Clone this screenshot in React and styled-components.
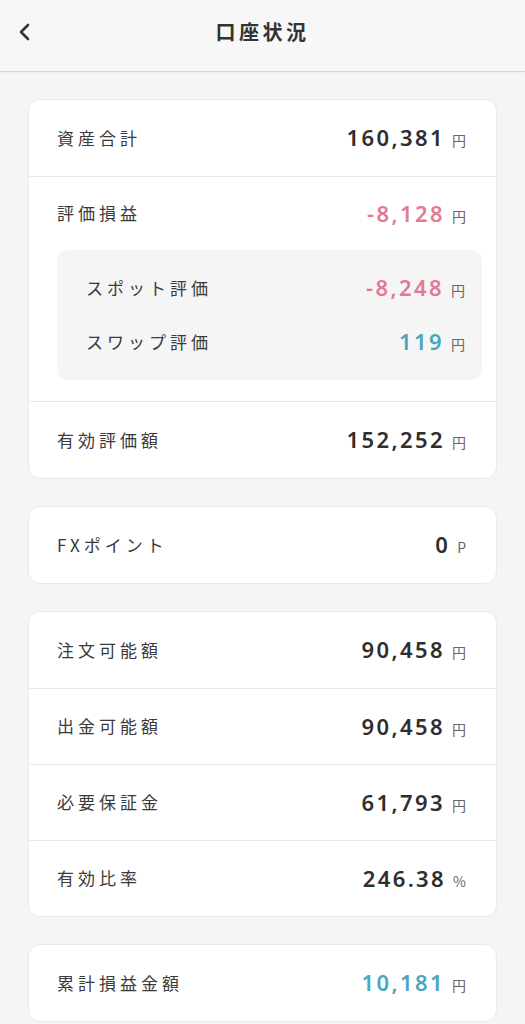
import React from 'react'
import styled, { createGlobalStyle } from 'styled-components'

const GlobalStyle = createGlobalStyle`
  html, body {
    margin: 0;
    padding: 0;
    background: #f5f5f5;
    font-family: "Noto Sans CJK JP", "Noto Sans", sans-serif;
    color: #333;
  }
`

const colors = {
  plain: '#2e2e2e',
  minus: '#e27a93',
  plus: '#4ba6c0',
}

const Header = styled.header`
  height: 72px;
  box-sizing: border-box;
  display: flex;
  align-items: center;
  justify-content: center;
  position: relative;
  padding-bottom: 8px;
  background: #f7f7f7;
  border-bottom: 1px solid #d6d6d6;
  box-shadow: 0 1px 2px rgba(0, 0, 0, 0.04);
`

const Back = styled.button`
  position: absolute;
  left: 12px;
  top: 18px;
  width: 26px;
  height: 28px;
  border: 0;
  padding: 0;
  background: none;
  display: flex;
  align-items: center;
  justify-content: center;
`

const Title = styled.h1`
  margin: 0;
  font-size: 20px;
  font-weight: 700;
  letter-spacing: 3.5px;
  color: #333;
`

const Page = styled.main`
  padding: 27px 28px 40px;
  display: flex;
  flex-direction: column;
  gap: 27px;
`

const Card = styled.section`
  background: #fff;
  border: 1px solid #e6eaec;
  border-radius: 12px;
  overflow: hidden;
`

const Row = styled.div`
  height: 76px;
  box-sizing: border-box;
  display: flex;
  align-items: center;
  justify-content: space-between;
  padding: 0 30px 2px 28px;
  & + & {
    border-top: 1px solid #e4e7e9;
  }
`

const Group = styled.div`
  border-top: 1px solid #e4e7e9;
  border-bottom: 1px solid #e4e7e9;
  padding-bottom: 21px;
  ${Row} {
    height: 73px;
  }
`

const SubBox = styled.div`
  margin: 0 14px 0 28px;
  padding: 11px 17px 11px 29px;
  background: #f5f5f5;
  border-radius: 10px;
`

const SubRow = styled.div`
  height: 54px;
  box-sizing: border-box;
  padding-bottom: 2px;
  display: flex;
  align-items: center;
  justify-content: space-between;
`

const Label = styled.span`
  font-size: 17px;
  line-height: 1;
  letter-spacing: 4px;
  color: #3a3a3a;
`

const Value = styled.span`
  display: flex;
  align-items: baseline;
  line-height: 1;
  color: ${p => colors[p.tone || 'plain']};
`

const Num = styled.span`
  font-family: "Noto Sans", sans-serif;
  font-size: 22px;
  font-weight: 600;
  letter-spacing: 2.4px;
`

const Unit = styled.span`
  font-family: "Noto Sans CJK JP", sans-serif;
  font-size: 14px;
  color: #666;
  margin-left: 7px;
`

function Amount({ value, unit = '円', tone }) {
  return (
    <Value tone={tone}>
      <Num>{value}</Num>
      <Unit>{unit}</Unit>
    </Value>
  )
}

export default function App() {
  return (
    <>
      <GlobalStyle />
      <Header>
        <Back aria-label="戻る">
          <svg width="14" height="20" viewBox="0 0 14 20">
            <polyline points="10,3 3,10 10,17" fill="none" stroke="#333" strokeWidth="2.6" strokeLinecap="round" strokeLinejoin="round" />
          </svg>
        </Back>
        <Title>口座状況</Title>
      </Header>
      <Page>
        <Card>
          <Row>
            <Label>資産合計</Label>
            <Amount value="160,381" />
          </Row>
          <Group>
            <Row>
              <Label>評価損益</Label>
              <Amount value="-8,128" tone="minus" />
            </Row>
            <SubBox>
              <SubRow>
                <Label>スポット評価</Label>
                <Amount value="-8,248" tone="minus" />
              </SubRow>
              <SubRow>
                <Label>スワップ評価</Label>
                <Amount value="119" tone="plus" />
              </SubRow>
            </SubBox>
          </Group>
          <Row>
            <Label>有効評価額</Label>
            <Amount value="152,252" />
          </Row>
        </Card>

        <Card>
          <Row>
            <Label>FXポイント</Label>
            <Amount value="0" unit="P" />
          </Row>
        </Card>

        <Card>
          <Row>
            <Label>注文可能額</Label>
            <Amount value="90,458" />
          </Row>
          <Row>
            <Label>出金可能額</Label>
            <Amount value="90,458" />
          </Row>
          <Row>
            <Label>必要保証金</Label>
            <Amount value="61,793" />
          </Row>
          <Row>
            <Label>有効比率</Label>
            <Amount value="246.38" unit="%" />
          </Row>
        </Card>

        <Card>
          <Row>
            <Label>累計損益金額</Label>
            <Amount value="10,181" tone="plus" />
          </Row>
        </Card>
      </Page>
    </>
  )
}
